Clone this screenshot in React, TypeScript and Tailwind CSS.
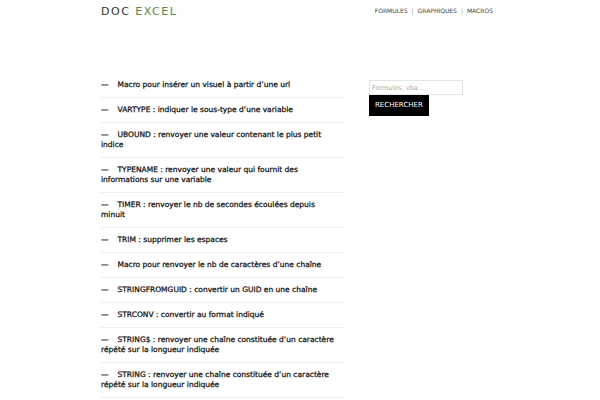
const items = [
  'Macro pour insérer un visuel à partir d’une url',
  'VARTYPE : indiquer le sous-type d’une variable',
  'UBOUND : renvoyer une valeur contenant le plus petit indice',
  'TYPENAME : renvoyer une valeur qui fournit des informations sur une variable',
  'TIMER : renvoyer le nb de secondes écoulées depuis minuit',
  'TRIM : supprimer les espaces',
  'Macro pour renvoyer le nb de caractères d’une chaîne',
  'STRINGFROMGUID : convertir un GUID en une chaîne',
  'STRCONV : convertir au format indiqué',
  'STRING$ : renvoyer une chaîne constituée d’un caractère répété sur la longueur indiquée',
  'STRING : renvoyer une chaîne constituée d’un caractère répété sur la longueur indiquée',
]

export default function App() {
  return (
    <div className="w-[600px] h-[400px] overflow-hidden bg-white font-['DejaVu_Sans',sans-serif]">
      <header className="flex items-center justify-between pl-[101px] pr-[107px] h-[22px]">
        <div className="text-[11px] tracking-[1.5px] leading-none pt-[1px]">
          <span className="text-[#333]">DOC</span> <span className="text-[#4c8a4c]">EXCEL</span>
        </div>
        <nav className="flex items-center text-[6px] text-[#444] leading-none gap-[4px]">
          <span>FORMULES</span>
          <span className="text-[#999]">|</span>
          <span>GRAPHIQUES</span>
          <span className="text-[#999]">|</span>
          <span>MACROS</span>
        </nav>
      </header>

      <div className="flex pl-[101px] pt-[51px] gap-[25px]">
        <ul className="w-[243px]">
          {items.map((t, i) => (
            <li
              key={i}
              className="border-b border-[#eee] py-[7px] pr-[7px] text-[7.5px] leading-[10px] text-[#111] [-webkit-text-stroke:0.25px_#111]"
            >
              <span className="mr-[9px]">—</span>
              {t}
            </li>
          ))}
        </ul>
        <aside className="w-[94px] pt-[7px]">
          <input
            className="block w-[94px] h-[15px] border border-[#e5e5e5] px-[2px] text-[6.5px] text-[#999] placeholder:text-[#aaa] outline-none"
            placeholder="Formules, vba ..."
          />
          <button className="block bg-black text-white text-[7px] h-[21px] px-[6px] leading-none">
            RECHERCHER
          </button>
        </aside>
      </div>
    </div>
  )
}
